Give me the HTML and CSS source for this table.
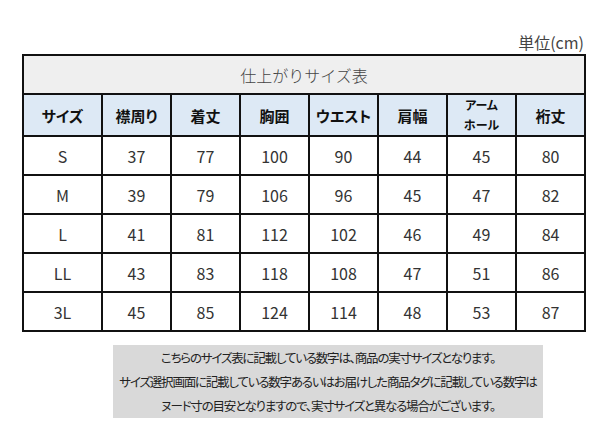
FILE: index.html
```html
<!DOCTYPE html>
<html lang="ja">
<head>
<meta charset="utf-8">
<link rel="stylesheet" href="styles.css">
</head>
<body>
<div class="page">
  <div class="unit">単位(cm)</div>
  <table class="size-table">
    <colgroup>
      <col class="c-first">
      <col class="c"><col class="c"><col class="c"><col class="c"><col class="c"><col class="c"><col class="c">
    </colgroup>
    <tr class="title-row"><td colspan="8">仕上がりサイズ表</td></tr>
    <tr class="head-row">
      <th>サイズ</th><th>襟周り</th><th>着丈</th><th>胸囲</th><th>ウエスト</th><th>肩幅</th><th class="small">アーム<br>ホール</th><th>裄丈</th>
    </tr>
    <tr><td>S</td><td>37</td><td>77</td><td>100</td><td>90</td><td>44</td><td>45</td><td>80</td></tr>
    <tr><td>M</td><td>39</td><td>79</td><td>106</td><td>96</td><td>45</td><td>47</td><td>82</td></tr>
    <tr><td>L</td><td>41</td><td>81</td><td>112</td><td>102</td><td>46</td><td>49</td><td>84</td></tr>
    <tr><td>LL</td><td>43</td><td>83</td><td>118</td><td>108</td><td>47</td><td>51</td><td>86</td></tr>
    <tr><td>3L</td><td>45</td><td>85</td><td>124</td><td>114</td><td>48</td><td>53</td><td>87</td></tr>
  </table>
  <div class="note">
    <p>こちらのサイズ表に記載している数字は、商品の実寸サイズとなります。</p>
    <p>サイズ選択画面に記載している数字あるいはお届けした商品タグに記載している数字は</p>
    <p>ヌード寸の目安となりますので、実寸サイズと異なる場合がございます。</p>
  </div>
</div>
</body>
</html>
```

FILE: styles.css
```css
html, body {
  margin: 0;
  padding: 0;
  background: #fff;
}
.page {
  width: 610px;
  height: 431px;
  padding: 32px 0 0 22px;
  box-sizing: border-box;
  font-family: "Noto Sans CJK JP", "Noto Sans", sans-serif;
  color: #333;
}
.unit {
  width: 562px;
  text-align: right;
  font-size: 16px;
  line-height: 21px;
  height: 22px;
  color: #444;
}
.size-table {
  border-collapse: collapse;
  table-layout: fixed;
  width: 563px;
}
.c-first { width: 79px; }
.c { width: 69px; }
.size-table td, .size-table th {
  border: 2px solid #111;
  height: 37px;
  box-sizing: border-box;
  padding: 0;
  text-align: center;
  vertical-align: middle;
}
.size-table tr {
  height: 39px;
}
.size-table td {
  font-size: 16px;
  color: #333;
}
.title-row td {
  background: #efefef;
  font-size: 16px;
  font-weight: 300;
  color: #444;
}
.head-row th {
  background: #dde9f5;
  font-size: 15px;
  font-weight: 700;
  color: #111;
  font-feature-settings: "palt";
}
.head-row th.small {
  font-size: 12px;
  line-height: 20px;
}
.note {
  margin: 13px 0 0 91px;
  width: 430px;
  height: 73px;
  background: #d9d9d9;
  box-sizing: border-box;
  padding-top: 1px;
  font-size: 12.5px;
  color: #222;
  text-align: center;
  white-space: nowrap;
  font-feature-settings: "palt";
  letter-spacing: -1.2px;
}
.note p {
  margin: 0;
  line-height: 24px;
}
```
